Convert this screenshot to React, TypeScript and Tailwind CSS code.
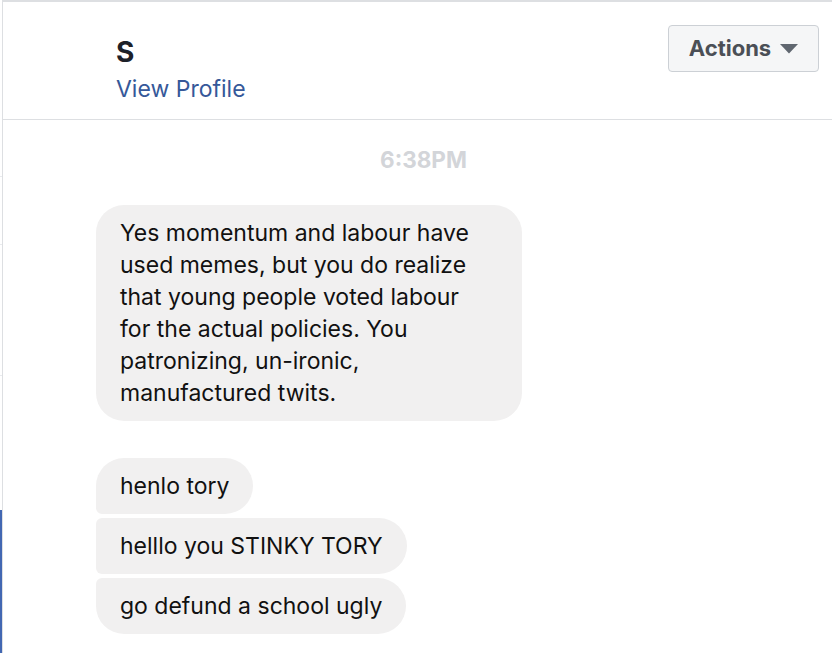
const font = "font-['Inter','Noto_Sans',sans-serif]";

function Bubble({ text, corners }: { text: string; corners: string }) {
  return (
    <div
      className={`bg-[#f1f0f0] px-6 py-3 text-[23px] leading-[32px] text-[#111111] whitespace-pre-line ${corners}`}
    >
      {text}
    </div>
  );
}

export default function App() {
  return (
    <div className={`w-[832px] h-[653px] flex bg-white overflow-hidden ${font}`}>
      {/* edge of the conversation list */}
      <div className="w-[2px] flex flex-col">
        <div className="h-[177px] border-b border-[#e9ebee]" />
        <div className="h-[68px] border-b border-[#e9ebee]" />
        <div className="h-[131px] border-b border-[#e9ebee]" />
        <div className="h-[134px]" />
        <div className="flex-1 bg-[#4267b2]" />
      </div>
      <div className="w-[1px] bg-[#dddfe2]" />

      <div className="flex-1 flex flex-col border-t-2 border-[#dddfe2]">
        <header className="h-[118px] shrink-0 flex items-start justify-between border-b border-[#dddfe2] pl-[113px] pr-[13px]">
          <div className="pt-[32px]">
            <div className="text-[28px] font-bold leading-[36px] text-[#1d2129]">S</div>
            <a className="block mt-[3px] text-[23px] leading-[32px] text-[#365899]">View Profile</a>
          </div>
          <button className="mt-[23px] h-[47px] w-[151px] flex items-center justify-center gap-[9px] rounded-[4px] border border-[#ccd0d5] bg-[#f5f6f7] text-[22px] font-bold text-[#4b4f56]">
            Actions
            <svg width="18" height="10" viewBox="0 0 18 10">
              <path d="M0 0h18L9 9.5z" fill="#606770" />
            </svg>
          </button>
        </header>

        <div className="flex flex-col items-start pl-[93px]">
          <div className="self-stretch h-[40px] mt-[20px] flex items-center justify-center pl-[12px] text-[22.5px] font-bold text-[#d3d5d9] -ml-[93px]">
            6:38PM
          </div>

          <div className="mt-[25px] w-[426px]">
            <Bubble
              corners="rounded-[28px]"
              text={
                "Yes momentum and labour have\nused memes, but you do realize\nthat young people voted labour\nfor the actual policies. You\npatronizing, un-ironic,\nmanufactured twits."
              }
            />
          </div>

          <div className="mt-[37px] flex flex-col items-start gap-[4px]">
            <Bubble corners="rounded-[28px] rounded-bl-[6px]" text="henlo tory" />
            <Bubble corners="rounded-[28px] rounded-l-[6px]" text="helllo you STINKY TORY" />
            <Bubble corners="rounded-[28px] rounded-tl-[6px]" text="go defund a school ugly" />
          </div>
        </div>
      </div>
    </div>
  );
}
